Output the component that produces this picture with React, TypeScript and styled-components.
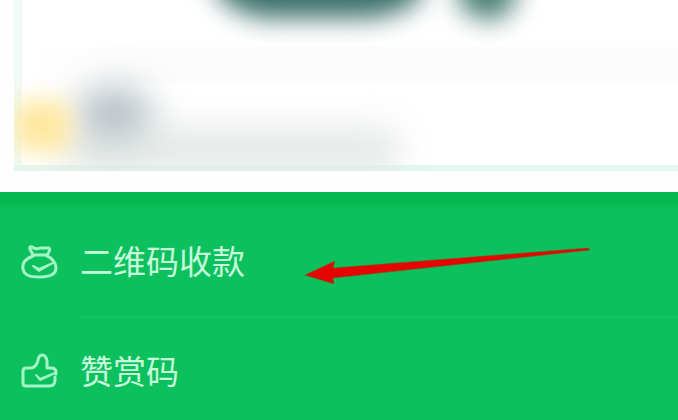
import React from "react";
import styled, { createGlobalStyle } from "styled-components";

const GlobalStyle = createGlobalStyle`
  * { box-sizing: border-box; }
  body {
    margin: 0;
    overflow: hidden;
    background: #fdfefd;
    font-family: "Noto Sans CJK SC", "Noto Sans", sans-serif;
  }
`;

const Page = styled.main`
  display: flex;
  flex-direction: column;
  height: 100vh;
  overflow: hidden;
`;

const PreviewArea = styled.section`
  flex: none;
  padding: 0 0 21px 14px;
`;

const PreviewCard = styled.div`
  height: 171px;
  overflow: hidden;
  background:
    linear-gradient(#e4f7f0, #e4f7f0) bottom / 100% 6px no-repeat,
    linear-gradient(#f0faf6, #f0faf6) left / 8px 100% no-repeat,
    #ffffff;
`;

const BlurredContent = styled.svg`
  display: block;
`;

const Menu = styled.nav`
  flex: 1 0 auto;
  padding-top: 16px;
  background: linear-gradient(#05b850 0, #05b850 10px, #0cc15d 18px);
`;

const MenuList = styled.ul`
  margin: 0;
  padding: 0;
  list-style: none;
`;

const MenuItem = styled.li<{ $divided?: boolean }>`
  position: relative;

  &::after {
    content: "";
    display: ${(p) => (p.$divided ? "block" : "none")};
    height: 2px;
    margin: 0 0 0 80px;
    background: #14c463;
  }
`;

const MenuButton = styled.button`
  display: flex;
  align-items: center;
  gap: 20px;
  width: 100%;
  height: 108px;
  padding: 0 20px;
  border: 0;
  background: transparent;
  color: #c6fadb;
  font-family: inherit;
  font-size: 33px;
  line-height: 48px;
  text-align: left;
  cursor: pointer;
`;

const MenuLabel = styled.span`
  padding-bottom: 4px;
`;

const MenuIcon = styled.svg`
  flex: none;
  width: 40px;
  height: 40px;
  fill: none;
  stroke: #a4f5c5;
  stroke-width: 3;
  stroke-linecap: round;
  stroke-linejoin: round;
`;

const Arrow = styled.svg`
  position: absolute;
  top: 34px;
  left: 300px;
  pointer-events: none;
`;

function MoneyBagIcon() {
  return (
    <MenuIcon viewBox="0 0 40 40" aria-hidden="true">
      <path d="M13 14C5 17 2 22 3 27C4 33 9 35 19 35C30 35 36 32 36 26C36 21 32 16 27 14" />
      <path d="M13 13L10 7Q9 4 12 5Q16 8 20 6Q25 6 29 6Q31 8 27 13Z" />
      <path d="M13 24L19 27L33 21L19 29Z" strokeWidth="2" fill="#a4f5c5" />
    </MenuIcon>
  );
}

function ThumbIcon() {
  return (
    <MenuIcon viewBox="0 0 40 40" aria-hidden="true">
      <path d="M36 22V20Q36 16 31 16H27V9Q26 3 22 3Q19 3 18 8Q17 14 12 16H6Q3 16 3 19V31Q3 34 6 34H29Q35 34 35 28V25" />
      <path d="M16 23L20 27L35 21L20 28Z" strokeWidth="2" fill="#a4f5c5" />
    </MenuIcon>
  );
}

function PreviewContent() {
  return (
    <BlurredContent width="664" height="171" viewBox="14 0 664 171" aria-hidden="true">
      <defs>
        <filter id="dark" filterUnits="userSpaceOnUse" x="100" y="-150" width="560" height="300" colorInterpolationFilters="sRGB">
          <feGaussianBlur stdDeviation="13" />
        </filter>
        <filter id="faint" filterUnits="userSpaceOnUse" x="-60" y="0" width="620" height="260" colorInterpolationFilters="sRGB">
          <feGaussianBlur stdDeviation="18" />
        </filter>
        <filter id="avatar" filterUnits="userSpaceOnUse" x="-60" y="20" width="220" height="220" colorInterpolationFilters="sRGB">
          <feGaussianBlur stdDeviation="12" />
        </filter>
        <linearGradient id="band" x1="0" x2="1" y1="0" y2="0">
          <stop offset="0" stopColor="#fcfcfc" stopOpacity="0" />
          <stop offset="0.15" stopColor="#fcfcfc" />
        </linearGradient>
      </defs>
      <rect x="30" y="47" width="648" height="36" fill="url(#band)" />
      <g filter="url(#dark)">
        <path d="M214 -80H422V-4Q400 18 360 18H266Q230 14 214 -12Z" fill="#3a6e68" />
        <path d="M458 -80H516V0Q506 20 488 20Q468 18 458 0Z" fill="#4a7e73" />
      </g>
      <rect x="66" y="130" width="332" height="40" fill="#e0e6e3" filter="url(#faint)" />
      <ellipse cx="114" cy="113" rx="38" ry="25" fill="#b0bbc0" filter="url(#faint)" />
      <rect x="14" y="101" width="56" height="50" rx="12" fill="#ffe79c" filter="url(#avatar)" />
    </BlurredContent>
  );
}

export default function App() {
  return (
    <>
      <GlobalStyle />
      <Page>
        <PreviewArea>
          <PreviewCard>
            <PreviewContent />
          </PreviewCard>
        </PreviewArea>
        <Menu>
          <MenuList>
            <MenuItem $divided>
              <MenuButton type="button">
                <MoneyBagIcon />
                <MenuLabel>二维码收款</MenuLabel>
              </MenuButton>
              <Arrow width="296" height="48" viewBox="0 0 296 48" aria-hidden="true">
                <path
                  d="M5 33L35 19L33 26L288 6L290 8L33 36L34 42Z"
                  fill="#e60505"
                  stroke="#75590f"
                  strokeOpacity="0.5"
                  strokeWidth="1"
                />
              </Arrow>
            </MenuItem>
            <MenuItem>
              <MenuButton type="button">
                <ThumbIcon />
                <MenuLabel>赞赏码</MenuLabel>
              </MenuButton>
            </MenuItem>
          </MenuList>
        </Menu>
      </Page>
    </>
  );
}
